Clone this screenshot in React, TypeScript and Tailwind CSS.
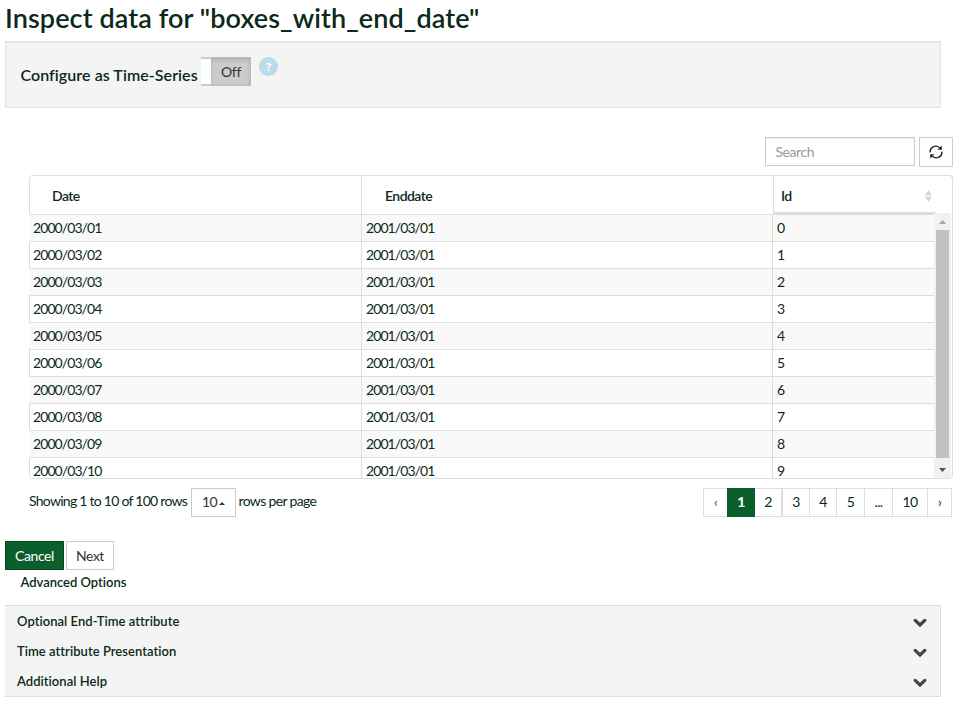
const rows = [
  ['2000/03/01', '2001/03/01', '0'],
  ['2000/03/02', '2001/03/01', '1'],
  ['2000/03/03', '2001/03/01', '2'],
  ['2000/03/04', '2001/03/01', '3'],
  ['2000/03/05', '2001/03/01', '4'],
  ['2000/03/06', '2001/03/01', '5'],
  ['2000/03/07', '2001/03/01', '6'],
  ['2000/03/08', '2001/03/01', '7'],
  ['2000/03/09', '2001/03/01', '8'],
  ['2000/03/10', '2001/03/01', '9'],
];

const pages = [
  { label: '‹', cls: 'w-6 border-y border-l border-[#ddd] text-[#0b5f2d] text-[13px]' },
  { label: '1', cls: 'w-7 bg-[#0a5f2c] text-white font-bold' },
  { label: '2', cls: 'w-[26px] border-y border-[#ddd]' },
  { label: '3', cls: 'w-7 border-y border-l-2 border-[#ddd]' },
  { label: '4', cls: 'w-[27px] border-y border-l border-[#ddd]' },
  { label: '5', cls: 'w-7 border-y border-l border-[#ddd]' },
  { label: '...', cls: 'w-7 border-y border-l border-[#ddd]' },
  { label: '10', cls: 'w-[35px] border-y border-l border-[#ddd]' },
  { label: '›', cls: 'w-[25px] border border-[#ddd] text-[13px]' },
];

function Chevron() {
  return (
    <svg width="14" height="10" viewBox="0 0 14 10" fill="none">
      <path d="M2.2 2.4 7 7 11.8 2.4" stroke="#444" strokeWidth="3.2" strokeLinecap="round" />
    </svg>
  );
}

function Refresh() {
  return (
    <svg width="14" height="14" viewBox="0 0 14 14" fill="none">
      <path d="M1.2 7.4A5.6 5.4 0 0 1 10.6 2.7M12.8 6.6A5.6 5.4 0 0 1 3.4 11.3" stroke="#222" strokeWidth="1.4" />
      <path d="M12.8.6v4.2H8.6zM1.2 13.4V9.2h4.2z" fill="#222" />
    </svg>
  );
}

export default function App() {
  return (
    <div className="h-[709px] w-[963px] overflow-hidden bg-white pl-[5px] font-['Lato',sans-serif] text-[14px] leading-5 text-[#0b2a18]">
      <h1 className="h-[41px] pt-[3px] text-[27px] font-semibold leading-[30px] tracking-[0.1px] whitespace-nowrap">
        Inspect data for "boxes_with_end_date"
      </h1>

      <section className="flex h-[67px] w-[936px] items-start border border-[#e3e3e3] bg-[#f4f4f4] pl-[15px] shadow-[inset_0_1px_1px_rgba(0,0,0,0.05)]">
        <span className="-ml-[0.5px] w-[180.5px] pt-[23px] text-[16px] font-semibold tracking-[0.06px] whitespace-nowrap">Configure as Time-Series</span>
        <div className="mt-[15px] flex h-[29px] w-[50px]">
          <div className="w-[10px] border-y-2 border-[#ccc] bg-white" />
          <div className="flex-1 border-y border-r border-[#bbb] bg-[#ccc] pt-[4px] pl-px text-center tracking-[-0.3px] text-[#333] shadow-[inset_0_2px_4px_rgba(0,0,0,0.15)]">Off</div>
        </div>
        <span className="mt-[15px] ml-2 flex size-[19px] items-center justify-center rounded-full bg-[#bbdaea] font-['Open_Sans',sans-serif] text-[11px] font-bold text-white">?</span>
      </section>

      <div className="mt-[29px] mr-[10px] flex h-[30px] justify-end gap-1">
        <div className="h-[29px] w-[150px] border border-[#ccc] pt-[4px] pl-[9.5px] tracking-[-0.45px] text-[#999] shadow-[inset_0_1px_1px_rgba(0,0,0,0.075)]">Search</div>
        <button className="flex h-[30px] w-[34px] items-center justify-center border border-[#ccc] pb-px"><Refresh /></button>
      </div>

      <section className="mt-2 ml-6 h-[304px] w-[924px] overflow-hidden rounded border border-l-0 border-[#ddd]">
        <div className="flex h-[38px] rounded-tl border-l border-[#ddd] font-semibold tracking-[-0.55px]">
          <div className="w-[332px] border-r border-[#ddd] pt-[10px] pl-[22px]">Date</div>
          <div className="w-[411px] pt-[10px] pl-[23px]">Enddate</div>
          <div className="flex h-[38px] w-[163px] justify-between border-b-2 border-l border-[#ddd] pt-[10px] pr-[4px] pl-[7px]">
            Id
            <svg className="mt-[4px]" width="7" height="12" viewBox="0 0 7 12" fill="#d4d4d4">
              <path d="M3.5 0 7 5.3H0zM3.5 12 0 6.7h7z" />
            </svg>
          </div>
        </div>
        <div className="flex h-[264px]">
          <div className="w-[905px] tracking-[-0.92px]">
            {rows.map((row, i) => (
              <div key={row[0]} className={`flex h-[27px] border-t border-t-[#ddd] border-l ${i % 2 === 0 ? 'border-l-[#f9f9f9] bg-[#f9f9f9]' : 'border-l-[#ddd] bg-white'}`}>
                <div className="w-[332px] border-r border-[#ddd] pt-[3px] pl-[3px]">{row[0]}</div>
                <div className="w-[411px] border-r border-[#ddd] pt-[3px] pl-[4px]">{row[1]}</div>
                <div className="pt-[3px] pl-[4px]">{row[2]}</div>
              </div>
            ))}
          </div>
          <div className="-mt-px flex h-[265px] w-[17px] flex-col items-center bg-[#f1f1f1]">
            <svg width="17" height="17" viewBox="0 0 17 17" fill="#a3a3a3"><path d="m5 11 3.5-4 3.5 4z" /></svg>
            <div className="h-[228px] w-[13px] bg-[#c1c1c1]" />
            <svg className="mt-[3px]" width="17" height="17" viewBox="0 0 17 17" fill="#505050"><path d="m5 7 3.5 4L12 7z" /></svg>
          </div>
        </div>
      </section>

      <div className="mt-[9px] mr-[11px] ml-6 flex h-[29px] justify-between">
        <div className="flex">
          <span className="w-[162px] pt-[3px] tracking-[-0.73px] whitespace-nowrap">Showing 1 to 10 of 100 rows</span>
          <button className="flex h-[29px] w-[45px] items-center justify-center gap-[2px] border border-[#ccc] pb-px tracking-[-0.6px] text-[#333]">
            10
            <svg className="mt-[2px]" width="6" height="3" viewBox="0 0 6 3" fill="#333"><path d="m0 3 3-3 3 3z" /></svg>
          </button>
          <span className="pt-[3px] pl-[2.5px] tracking-[-0.65px] whitespace-nowrap">rows per page</span>
        </div>
        <div className="flex tracking-[-0.6px]">
          {pages.map((page) => (
            <div key={page.label} className={`flex h-[29px] items-center justify-center pb-px ${page.cls}`}>
              {page.label}
            </div>
          ))}
        </div>
      </div>

      <div className="mt-6 flex h-[29px] gap-[2px] tracking-[-0.4px]">
        <button className="w-[59px] border border-[#07491f] bg-[#0a5f2c] text-white">Cancel</button>
        <button className="w-12 border border-[#ccc] tracking-[-0.5px] text-[#333]">Next</button>
      </div>
      <h2 className="h-[35px] pt-[2px] pl-[15.5px] text-[13px] font-semibold tracking-[-0.02px]">Advanced Options</h2>
      <section className="h-[92px] w-[936px] border border-l-0 border-[#ddd] bg-[#f4f4f4] text-[13px] font-semibold tracking-[0.04px]">
        {['Optional End-Time attribute', 'Time attribute Presentation', 'Additional Help'].map((title) => (
          <div key={title} className="flex h-[30px] items-start justify-between pt-[5px] pr-[13px] pl-[12px]">
            <span>{title}</span>
            <span className="pt-[7px]"><Chevron /></span>
          </div>
        ))}
      </section>
    </div>
  );
}
